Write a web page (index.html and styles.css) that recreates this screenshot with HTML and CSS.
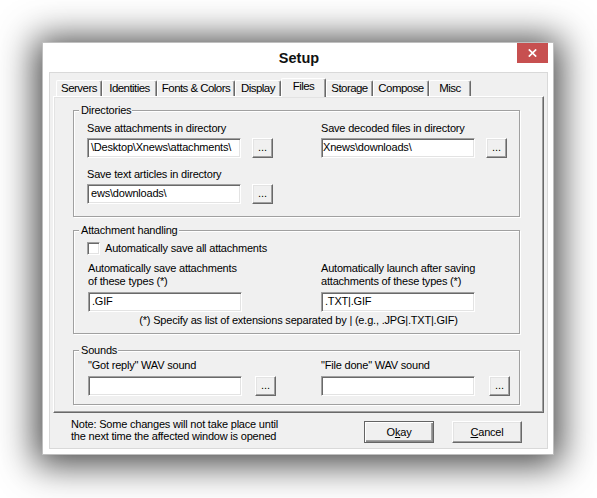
FILE: index.html
```html
<!DOCTYPE html>
<html lang="en">
<head>
<meta charset="utf-8">
<title>Setup</title>
<link rel="stylesheet" href="styles.css">
</head>
<body>
<div class="window">
  <div class="titlebar">
    <div class="title">Setup</div>
    <button class="close" aria-label="Close"><svg width="9" height="8" viewBox="0 0 9 8"><path d="M0.8 0.4 L8.2 7.6 M8.2 0.4 L0.8 7.6" stroke="#fff" stroke-width="1.7" fill="none"/></svg></button>
  </div>
  <div class="client">
    <div class="tabs">
      <div class="tab">Servers</div>
      <div class="tab">Identities</div>
      <div class="tab">Fonts &amp; Colors</div>
      <div class="tab">Display</div>
      <div class="tab active">Files</div>
      <div class="tab">Storage</div>
      <div class="tab">Compose</div>
      <div class="tab">Misc</div>
    </div>
    <div class="panel">
      <div class="group group-dirs">
        <div class="group-title">Directories</div>
        <div class="cols cols-dirs">
          <div class="cell">
            <div class="label">Save attachments in directory</div>
            <div class="row"><div class="field">\Desktop\Xnews\attachments\</div><button class="browse">...</button></div>
          </div>
          <div class="cell">
            <div class="label">Save decoded files in directory</div>
            <div class="row"><div class="field field-focus">Xnews\downloads\</div><button class="browse">...</button></div>
          </div>
          <div class="cell">
            <div class="label">Save text articles in directory</div>
            <div class="row"><div class="field">ews\downloads\</div><button class="browse">...</button></div>
          </div>
        </div>
      </div>

      <div class="group group-attach">
        <div class="group-title">Attachment handling</div>
        <div class="check-row"><span class="checkbox"></span><span class="check-label">Automatically save all attachments</span></div>
        <div class="cols cols-attach">
          <div class="cell">
            <div class="label">Automatically save attachments<br>of these types (*)</div>
            <div class="row row-attach"><div class="field">.GIF</div></div>
          </div>
          <div class="cell">
            <div class="label">Automatically launch after saving<br>attachments of these types (*)</div>
            <div class="row row-attach"><div class="field">.TXT|.GIF</div></div>
          </div>
        </div>
        <div class="footnote">(*) Specify as list of extensions separated by | (e.g., .JPG|.TXT|.GIF)</div>
      </div>

      <div class="group group-sounds">
        <div class="group-title">Sounds</div>
        <div class="cols cols-sounds">
          <div class="cell">
            <div class="label">"Got reply" WAV sound</div>
            <div class="row row-sound"><div class="field"></div><button class="browse browse-sound">...</button></div>
          </div>
          <div class="cell">
            <div class="label">"File done" WAV sound</div>
            <div class="row row-sound"><div class="field"></div><button class="browse browse-sound2">...</button></div>
          </div>
        </div>
      </div>
    </div>
    <div class="footer">
      <div class="note">Note: Some changes will not take place until<br>the next time the affected window is opened</div>
      <button class="dlg-btn default">O<u>k</u>ay</button>
      <button class="dlg-btn cancel"><u>C</u>ancel</button>
    </div>
  </div>
</div>
</body>
</html>
```

FILE: styles.css
```css
html, body {
  margin: 0;
  background: #ffffff;
}

html {
  height: 498px;
  overflow: hidden;
}

body {
  box-sizing: border-box;
  height: 498px;
  padding: 42px 0 0 42px;
  font-family: "Liberation Sans", Arial, sans-serif;
  font-size: 11px;
  letter-spacing: -0.2px;
  color: #000;
}

.window {
  box-sizing: border-box;
  width: 512px;
  height: 413px;
  background: #ffffff;
  border: 1px solid rgba(0, 0, 0, 0.25);
  padding: 0 5px 5px 6px;
  box-shadow: 0 3px 34px 7px rgba(0, 0, 0, 0.72);
}

.titlebar {
  height: 29px;
  display: grid;
  grid-template-columns: 1fr auto 1fr;
}

.title {
  grid-column: 2;
  align-self: center;
  font-size: 14.5px;
  font-weight: bold;
  letter-spacing: 0;
  color: #111;
  margin-left: 1px;
}

.close {
  grid-column: 3;
  justify-self: end;
  align-self: start;
  width: 31px;
  height: 20px;
  padding: 0;
  margin: 0;
  border: 0;
  background: #c75050;
  display: flex;
  align-items: center;
  justify-content: center;
}

.close svg {
  display: block;
}

.client {
  box-sizing: border-box;
  height: 377px;
  background: #f0f0f0;
  border: 1px solid #d9d9d9;
  padding: 5px 3px 0 3px;
}

/* Tabs */
.tabs {
  display: flex;
  align-items: flex-end;
  height: 18px;
  padding-left: 3px;
}

.tab {
  box-sizing: border-box;
  height: 16px;
  line-height: 14px;
  text-align: center;
  font-size: 11.5px;
  letter-spacing: -0.55px;
  background: #f0f0f0;
  border-top: 1px solid #ffffff;
  border-left: 1px solid #ffffff;
  border-right: 1px solid #696969;
  border-radius: 2px 2px 0 0;
  box-shadow: inset -1px 0 0 #a0a0a0;
  white-space: nowrap;
}

.tab:nth-child(1) { width: 46px; }
.tab:nth-child(2) { width: 55px; }
.tab:nth-child(3) { width: 78px; }
.tab:nth-child(4) { width: 46px; }
.tab:nth-child(5) { width: 45px; }
.tab:nth-child(6) { width: 47px; }
.tab:nth-child(7) { width: 56px; }
.tab:nth-child(8) { width: 42px; }

.tab.active {
  height: 19px;
  line-height: 15px;
  margin-bottom: -1px;
  position: relative;
  z-index: 1;
}

/* Panel */
.panel {
  box-sizing: border-box;
  height: 317px;
  background: #f0f0f0;
  border-top: 1px solid #ffffff;
  border-left: 1px solid #ffffff;
  border-right: 1px solid #696969;
  border-bottom: 1px solid #696969;
  box-shadow: inset -1px -1px 0 #a0a0a0, inset 1px 1px 0 #e3e3e3;
  padding-left: 19px;
}

.group {
  box-sizing: border-box;
  width: 447px;
  border: 1px solid #a0a0a0;
  box-shadow: inset 1px 1px 0 #ffffff, 1px 1px 0 #ffffff;
}

.group-dirs {
  margin-top: 13px;
  padding-bottom: 12px;
}

.group-attach {
  margin-top: 13px;
  padding-bottom: 6px;
}

.group-sounds {
  margin-top: 16px;
  padding-bottom: 8px;
}

.group-title {
  width: fit-content;
  height: 13px;
  line-height: 13px;
  margin-top: -7px;
  margin-left: 5px;
  padding: 0 1px 0 2px;
  background: #f0f0f0;
  position: relative;
}

.cols {
  display: grid;
  grid-template-columns: 234px 1fr;
  row-gap: 10px;
  padding-left: 13px;
}

.cols-dirs { margin-top: 5px; }
.cols-attach { margin-top: 7px; padding-left: 14px; }
.cols-sounds { margin-top: 2px; padding-left: 14px; }

.cols-attach .cell:nth-child(2),
.cols-sounds .cell:nth-child(2) {
  margin-left: -1px;
}

.label {
  line-height: 13px;
  white-space: nowrap;
}

.row {
  display: flex;
  margin-top: 3px;
}

.row-attach,
.row-sound {
  margin-top: 4px;
}

.field {
  box-sizing: border-box;
  width: 154px;
  height: 20px;
  background: #ffffff;
  border-top: 1px solid #a0a0a0;
  border-left: 1px solid #a0a0a0;
  border-right: 1px solid #ffffff;
  border-bottom: 1px solid #ffffff;
  box-shadow: inset 1px 1px 0 #696969, inset -1px -1px 0 #e3e3e3;
  padding: 1px 0 0 3px;
  line-height: 14px;
  white-space: nowrap;
  overflow: hidden;
}

.field-focus {
  text-indent: -2px;
}

.browse {
  box-sizing: border-box;
  width: 21px;
  height: 20px;
  margin: 0 0 0 11px;
  padding: 0 0 2px 0;
  font-family: inherit;
  font-size: 11px;
  letter-spacing: 0;
  color: #000;
  background: #f0f0f0;
  border-top: 1px solid #ffffff;
  border-left: 1px solid #ffffff;
  border-right: 1px solid #696969;
  border-bottom: 1px solid #696969;
  box-shadow: inset -1px -1px 0 #a0a0a0, inset 1px 1px 0 #e3e3e3;
  line-height: 14px;
}

.browse-sound { margin-left: 13px; }
.browse-sound2 { margin-left: 14px; width: 21px; }

.check-row {
  display: flex;
  align-items: center;
  height: 13px;
  margin-top: 5px;
  padding-left: 13px;
  line-height: 13px;
}

.checkbox {
  box-sizing: border-box;
  width: 13px;
  height: 13px;
  background: #ffffff;
  border-top: 1px solid #a0a0a0;
  border-left: 1px solid #a0a0a0;
  border-right: 1px solid #ffffff;
  border-bottom: 1px solid #ffffff;
  box-shadow: inset 1px 1px 0 #696969, inset -1px -1px 0 #e3e3e3;
}

.check-label {
  margin-left: 5px;
}

.footnote {
  margin-top: 2px;
  line-height: 13px;
  text-align: center;
  padding-left: 4px;
  white-space: nowrap;
}

/* Footer */
.footer {
  display: flex;
  align-items: flex-start;
  margin-top: 8px;
  height: 22px;
}

.note {
  margin-left: 18px;
  margin-top: -3px;
  line-height: 12px;
  white-space: nowrap;
}

.dlg-btn {
  box-sizing: border-box;
  width: 70px;
  height: 22px;
  margin: 0;
  padding: 0 0 1px 0;
  font-family: inherit;
  font-size: 11px;
  letter-spacing: -0.2px;
  color: #000;
  background: #f0f0f0;
  border-top: 1px solid #ffffff;
  border-left: 1px solid #ffffff;
  border-right: 1px solid #696969;
  border-bottom: 1px solid #696969;
  box-shadow: inset -1px -1px 0 #a0a0a0, inset 1px 1px 0 #e3e3e3;
  line-height: 18px;
}

.dlg-btn.default {
  margin-left: auto;
  border: 1px solid #646464;
  box-shadow: inset 1px 1px 0 #ffffff, inset -1px -1px 0 #8a8a8a, inset -2px -2px 0 #a0a0a0;
}

.dlg-btn.cancel {
  margin-left: 18px;
  margin-right: 22px;
}

.dlg-btn u {
  text-decoration: underline;
  text-underline-offset: 1px;
}
```
